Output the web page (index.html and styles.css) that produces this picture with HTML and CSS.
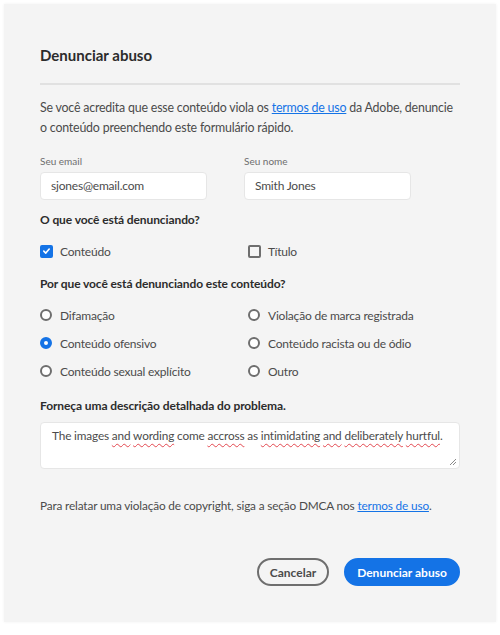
FILE: index.html
```html
<!DOCTYPE html>
<html lang="pt">
<head>
<meta charset="utf-8">
<link rel="stylesheet" href="styles.css">
</head>
<body>
<div class="dialog">
  <h1 class="title">Denunciar abuso</h1>
  <hr class="divider">
  <p class="intro">Se você acredita que esse conteúdo viola os <a href="#" class="link">termos de uso</a> da Adobe, denuncie<br>o conteúdo preenchendo este formulário rápido.</p>

  <div class="fields">
    <div class="field">
      <label class="label">Seu email</label>
      <div class="input">sjones@email.com</div>
    </div>
    <div class="field">
      <label class="label">Seu nome</label>
      <div class="input">Smith Jones</div>
    </div>
  </div>

  <h2 class="section">O que você está denunciando?</h2>
  <div class="options checks">
    <div class="option"><span class="checkbox checked"><svg viewBox="0 0 10 10" width="10" height="10"><path d="M2 5.2 L4.2 7.3 L8 2.8" fill="none" stroke="#fff" stroke-width="1.8" stroke-linecap="round" stroke-linejoin="round"/></svg></span>Conteúdo</div>
    <div class="option"><span class="checkbox"></span>Título</div>
  </div>

  <h2 class="section">Por que você está denunciando este conteúdo?</h2>
  <div class="options radios">
    <div class="option"><span class="radio"></span>Difamação</div>
    <div class="option"><span class="radio"></span>Violação de marca registrada</div>
    <div class="option"><span class="radio selected"></span>Conteúdo ofensivo</div>
    <div class="option"><span class="radio"></span>Conteúdo racista ou de ódio</div>
    <div class="option"><span class="radio"></span>Conteúdo sexual explícito</div>
    <div class="option"><span class="radio"></span>Outro</div>
  </div>

  <h2 class="section">Forneça uma descrição detalhada do problema.</h2>
  <div class="textarea">The images <span class="sp">and</span> <span class="sp">wording</span> come <span class="sp">accross</span> as <span class="sp">intimidating</span> <span class="sp">and</span> <span class="sp">deliberately</span> <span class="sp">hurtful</span>.<svg class="grip" viewBox="0 0 8 8" width="8" height="8"><path d="M1 7 L7 1 M4 7 L7 4" stroke="#8a8a8a" stroke-width="1"/></svg></div>

  <p class="note">Para relatar uma violação de copyright, siga a seção DMCA nos <a href="#" class="link">termos de uso</a>.</p>

  <div class="actions">
    <button class="btn btn-secondary">Cancelar</button>
    <button class="btn btn-primary">Denunciar abuso</button>
  </div>
</div>
</body>
</html>
```

FILE: styles.css
```css
* { box-sizing: border-box; }
html, body { margin: 0; padding: 0; }
body {
  background: #ffffff;
  font-family: Lato, "Noto Sans", sans-serif;
  color: #4b4b4b;
  width: 500px;
  height: 635px;
  overflow: hidden;
}
.dialog {
  margin: 4px;
  height: 618px;
  background: #f4f4f4;
  box-shadow: 0 0 3px rgba(0,0,0,0.06);
  padding: 41px 36px 0 36px;
}
.title {
  margin: 0;
  font-size: 15px;
  line-height: 20px;
  font-weight: 700;
  color: #2c2c2c;
}
.divider {
  margin: 18px 0 0 0;
  border: 0;
  height: 2px;
  background: #e1e1e1;
}
.intro {
  margin: 13px 0 0 0;
  font-size: 12.4px;
  letter-spacing: -0.2px;
  line-height: 20px;
}
.link {
  color: #1473e6;
  text-decoration: underline;
}
.fields {
  display: grid;
  grid-template-columns: 204px 167px;
  margin-top: 16px;
}
.field { display: flex; flex-direction: column; gap: 4px; }
.label {
  font-size: 10px;
  line-height: 14px;
  color: #6e6e6e;
}
.input {
  width: 167px;
  height: 28px;
  background: #fff;
  border: 1px solid #e6e6e6;
  border-radius: 4px;
  padding: 0 10px;
  font-size: 12px;
  letter-spacing: -0.2px;
  line-height: 26px;
  color: #4b4b4b;
}
.section {
  margin: 11px 0 0 0;
  font-size: 12px;
  letter-spacing: -0.1px;
  line-height: 18px;
  font-weight: 700;
  color: #2c2c2c;
}
.options {
  display: grid;
  grid-template-columns: 208px 1fr;
  row-gap: 8px;
  margin-top: 12px;
}
.checks + .section { margin-top: 14px; }
.radios + .section { margin-top: 16px; }
.option {
  display: flex;
  align-items: center;
  height: 20px;
  font-size: 12px;
  letter-spacing: -0.2px;
  color: #4b4b4b;
}
.checkbox {
  width: 13px;
  height: 13px;
  border: 2px solid #6e6e6e;
  border-radius: 2px;
  margin-right: 7px;
  display: flex;
  align-items: center;
  justify-content: center;
  flex-shrink: 0;
}
.checkbox.checked {
  background: #1473e6;
  border-color: #1473e6;
}
.radio {
  width: 12px;
  height: 12px;
  border: 2px solid #6e6e6e;
  border-radius: 50%;
  margin-right: 8px;
  flex-shrink: 0;
  background: #fff;
}
.radio.selected {
  border: 4px solid #1473e6;
}
.textarea {
  position: relative;
  margin-top: 7px;
  height: 47px;
  background: #fff;
  border: 1px solid #e6e6e6;
  border-radius: 4px;
  padding: 3px 11px;
  font-size: 11.8px;
  letter-spacing: -0.15px;
  line-height: 20px;
  color: #4b4b4b;
}
.sp {
  text-decoration: underline wavy #e34850;
  text-decoration-thickness: 1px;
  text-underline-offset: 3px;
}
.grip {
  position: absolute;
  right: 2px;
  bottom: 2px;
}
.note {
  margin: 27px 0 0 0;
  font-size: 11.8px;
  letter-spacing: -0.15px;
  line-height: 20px;
}
.actions {
  display: flex;
  justify-content: flex-end;
  gap: 15px;
  margin-top: 42px;
}
.btn {
  height: 28px;
  border-radius: 15px;
  font-family: Lato, "Noto Sans", sans-serif;
  font-size: 12px;
  font-weight: 700;
  padding: 0;
  white-space: nowrap;
  cursor: pointer;
}
.btn-secondary {
  background: transparent;
  border: 2px solid #6e6e6e;
  color: #4b4b4b;
  width: 72px;
}
.btn-primary {
  background: #1473e6;
  border: 2px solid #1473e6;
  color: #fff;
  width: 116px;
}
```
